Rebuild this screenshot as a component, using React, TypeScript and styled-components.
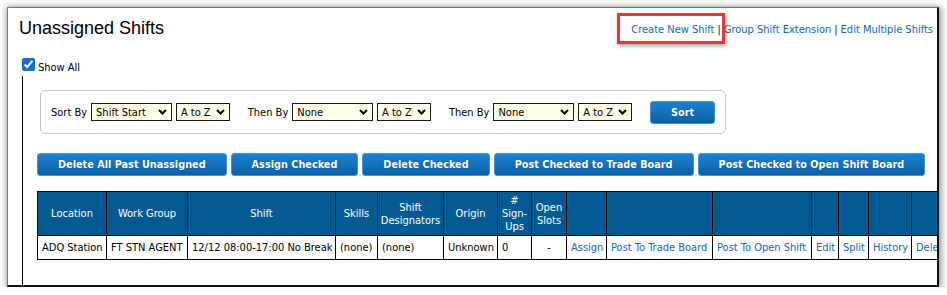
import React from 'react';
import styled, { createGlobalStyle } from 'styled-components';

const GlobalStyle = createGlobalStyle`
  html, body { margin: 0; padding: 0; background: #fff; }
  body {
    font-family: "DejaVu Sans Condensed", "DejaVu Sans", sans-serif;
    font-size: 11px;
    color: #000;
  }
`;

const Frame = styled.div`
  position: relative;
  box-sizing: border-box;
  margin: 7px 0 0 7px;
  width: 932px;
  height: 280px;
  background: #fff;
  border-top: 1px solid #7a7a7a;
  border-left: 1px solid #7a7a7a;
  border-right: 2px solid #111;
  border-bottom: 2px solid #111;
  box-shadow: 1px 1px 7px 1px rgba(0, 0, 0, 0.45);
  overflow: hidden;
`;

const TopBar = styled.div`
  display: flex;
  justify-content: space-between;
  align-items: flex-start;
  padding: 10px 4px 0 11px;
`;

const Title = styled.h1`
  margin: 0;
  font-family: "Liberation Sans", Arial, sans-serif;
  font-size: 18px;
  font-weight: normal;
  line-height: 21px;
`;

const Links = styled.div`
  margin-top: 5px;
  line-height: 13px;
  white-space: nowrap;
`;

const Link = styled.a`
  color: #1468c0;
  text-decoration: none;
  cursor: pointer;
`;

const Sep = styled.span`
  color: #222;
  margin: 0 3px;
`;

const Highlight = styled.span`
  position: relative;
  &::after {
    content: '';
    position: absolute;
    left: -14px;
    right: -11px;
    top: -10px;
    bottom: -8px;
    border: 3px solid #e5393f;
    box-shadow: 1px 2px 4px rgba(0, 0, 0, 0.35);
  }
`;

const ShowAllRow = styled.label`
  display: flex;
  align-items: baseline;
  height: 18px;
  margin-top: 19px;
  padding-left: 14px;
  line-height: 13px;
`;

const Check = styled.input`
  margin: 0 3px 0 0;
  width: 13px;
  height: 13px;
  accent-color: #0a6fe0;
`;

const Content = styled.div`
  margin-left: 14px;
  border-left: 1px solid #000;
  padding: 14px 0 0 14px;
  min-height: 230px;
`;

const SortBox = styled.div`
  box-sizing: border-box;
  display: flex;
  align-items: center;
  width: 686px;
  height: 44px;
  margin-left: 3px;
  padding: 0 10px;
  border: 1px solid #c8c8c8;
  border-radius: 5px;
`;

const SortLabel = styled.span<{ $gap?: number }>`
  margin-left: ${p => p.$gap ?? 0}px;
  margin-right: 4px;
  white-space: nowrap;
`;

const Select = styled.div<{ $w: number }>`
  box-sizing: border-box;
  display: flex;
  align-items: center;
  justify-content: space-between;
  width: ${p => p.$w}px;
  height: 18px;
  margin-right: 4px;
  padding: 0 4px 0 4px;
  border: 1px solid #1a1a1a;
  background: #fffde4;
  white-space: nowrap;
`;

const BlueButton = styled.button<{ $w?: number }>`
  box-sizing: border-box;
  height: 23px;
  ${p => (p.$w ? `width: ${p.$w}px;` : 'padding: 0 20px;')}
  border: 1px solid #4593d8;
  border-radius: 3px;
  background: linear-gradient(#1c82d3, #0b5fa4);
  color: #fff;
  font-family: "DejaVu Sans Condensed", "DejaVu Sans", sans-serif;
  font-size: 10.8px;
  font-weight: bold;
  text-shadow: 0 0 1px rgba(0, 0, 0, 0.35);
  white-space: nowrap;
  cursor: pointer;
`;

const SortButton = styled(BlueButton)`
  margin-left: 14px;
`;

const ButtonRow = styled.div`
  display: flex;
  gap: 4px;
  margin-top: 19px;
`;

const Grid = styled.table<{ $w: number }>`
  margin-top: 15px;
  border-collapse: collapse;
  table-layout: fixed;
  width: ${p => p.$w}px;
`;

const Th = styled.th`
  height: 43px;
  padding: 0 2px;
  border: 1px solid #000;
  background: #035a93;
  color: #fff;
  font-weight: normal;
  line-height: 13px;
  text-align: center;
  white-space: nowrap;
`;

const Td = styled.td<{ $center?: boolean }>`
  height: 23px;
  padding: 0 4px;
  border: 1px solid #000;
  text-align: ${p => (p.$center ? 'center' : 'left')};
  white-space: nowrap;
  overflow: hidden;
`;

const Chevron = () => (
  <svg width="9" height="6" viewBox="0 0 9 6">
    <polyline points="1,1 4.5,4.5 8,1" fill="none" stroke="#000" strokeWidth="2" />
  </svg>
);

const Dropdown: React.FC<{ w: number; value: string }> = ({ w, value }) => (
  <Select $w={w}>
    <span>{value}</span>
    <Chevron />
  </Select>
);

const columns: { head: React.ReactNode; w: number }[] = [
  { head: 'Location', w: 69 },
  { head: 'Work Group', w: 81 },
  { head: 'Shift', w: 148 },
  { head: 'Skills', w: 42 },
  { head: <>Shift<br />Designators</>, w: 66 },
  { head: 'Origin', w: 54 },
  { head: <>#<br />Sign-<br />Ups</>, w: 34 },
  { head: <>Open<br />Slots</>, w: 35 },
  { head: '', w: 40 },
  { head: '', w: 106 },
  { head: '', w: 99 },
  { head: '', w: 27 },
  { head: '', w: 30 },
  { head: '', w: 43 },
  { head: '', w: 60 },
];

const tableWidth = columns.reduce((s, c) => s + c.w, 0);

const App: React.FC = () => {
  return (
    <>
      <GlobalStyle />
      <Frame>
        <TopBar>
          <Title>Unassigned Shifts</Title>
          <Links>
            <Highlight><Link>Create New Shift</Link></Highlight>
            <Sep>|</Sep>
            <Link>Group Shift Extension</Link>
            <Sep>|</Sep>
            <Link>Edit Multiple Shifts</Link>
          </Links>
        </TopBar>

        <ShowAllRow>
          <Check type="checkbox" defaultChecked />
          <span>Show All</span>
        </ShowAllRow>

        <Content>
          <SortBox>
            <SortLabel>Sort By</SortLabel>
            <Dropdown w={81} value="Shift Start" />
            <Dropdown w={54} value="A to Z" />
            <SortLabel $gap={14}>Then By</SortLabel>
            <Dropdown w={81} value="None" />
            <Dropdown w={54} value="A to Z" />
            <SortLabel $gap={14}>Then By</SortLabel>
            <Dropdown w={81} value="None" />
            <Dropdown w={54} value="A to Z" />
            <SortButton $w={65}>Sort</SortButton>
          </SortBox>

          <ButtonRow>
            <BlueButton>Delete All Past Unassigned</BlueButton>
            <BlueButton>Assign Checked</BlueButton>
            <BlueButton>Delete Checked</BlueButton>
            <BlueButton>Post Checked to Trade Board</BlueButton>
            <BlueButton>Post Checked to Open Shift Board</BlueButton>
          </ButtonRow>

          <Grid $w={tableWidth}>
            <colgroup>
              {columns.map((c, i) => <col key={i} style={{ width: c.w }} />)}
            </colgroup>
            <thead>
              <tr>
                {columns.map((c, i) => <Th key={i}>{c.head}</Th>)}
              </tr>
            </thead>
            <tbody>
              <tr>
                <Td>ADQ Station</Td>
                <Td>FT STN AGENT</Td>
                <Td>12/12 08:00-17:00 No Break</Td>
                <Td>(none)</Td>
                <Td>(none)</Td>
                <Td>Unknown</Td>
                <Td>0</Td>
                <Td $center>-</Td>
                <Td><Link>Assign</Link></Td>
                <Td><Link>Post To Trade Board</Link></Td>
                <Td><Link>Post To Open Shift</Link></Td>
                <Td><Link>Edit</Link></Td>
                <Td><Link>Split</Link></Td>
                <Td><Link>History</Link></Td>
                <Td><Link>Delete</Link></Td>
              </tr>
            </tbody>
          </Grid>
        </Content>
      </Frame>
    </>
  );
};

export default App;
